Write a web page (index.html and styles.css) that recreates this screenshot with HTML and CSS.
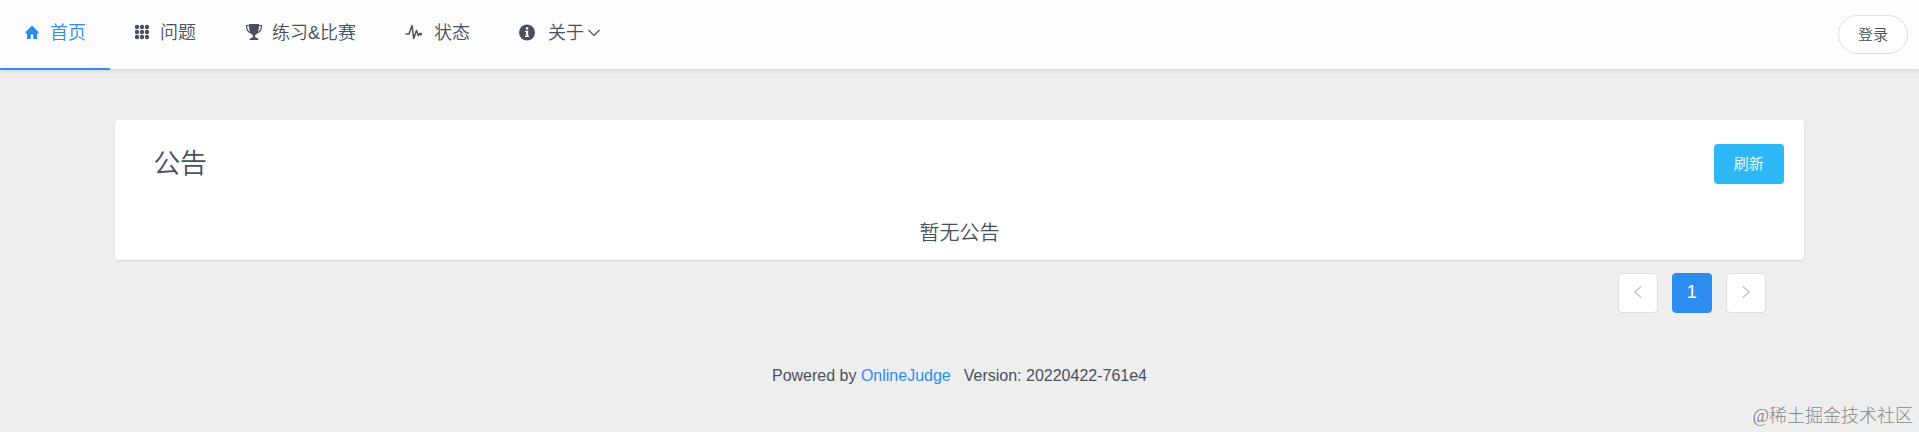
FILE: index.html
```
<!DOCTYPE html>
<html lang="zh-CN">
<head>
  <meta charset="UTF-8" />
  <meta name="viewport" content="width=device-width, initial-scale=1.0"/>
  <title>OnlineJudge</title>
  <link rel="stylesheet" href="styles.css">
</head>
<body>

<!-- Header -->
<header class="header">
  <nav class="menu">
    <a class="menu-item active" href="#">
      <svg width="18" height="18" viewBox="0 0 18 18" fill="currentColor"><path d="M8 1.500 1.500 8v1.500H3V15h3.800v-4.500h2.400V15H13V9.500h1.500V8z"/></svg>
      首页
    </a>
    <a class="menu-item" href="#">
      <svg width="18" height="18" viewBox="0 0 18 18" fill="currentColor">
        <circle cx="3" cy="3" r="2.200"/><circle cx="8" cy="3" r="2.200"/><circle cx="13" cy="3" r="2.200"/>
        <circle cx="3" cy="8" r="2.200"/><circle cx="8" cy="8" r="2.200"/><circle cx="13" cy="8" r="2.200"/>
        <circle cx="3" cy="13" r="2.200"/><circle cx="8" cy="13" r="2.200"/><circle cx="13" cy="13" r="2.200"/>
      </svg>
      问题
    </a>
    <a class="menu-item" href="#">
      <svg width="20" height="18" viewBox="0 0 20 18" fill="currentColor">
        <path d="M5 0h10v2c0 4.500-1.500 8-3.800 9v2.500c2 .2 3 1 3.300 2.500h-9c.3-1.500 1.300-2.300 3.300-2.500V11C6.500 10 5 6.500 5 2z"/>
        <path d="M5 1.500H2.500C2.500 5.500 4 8 7 9M15 1.500h2.500C17.500 5.500 16 8 13 9" fill="none" stroke="currentColor" stroke-width="1.200"/>
      </svg>
      练习&amp;比赛
    </a>
    <a class="menu-item" href="#">
      <svg width="22" height="18" viewBox="0 0 22 18" fill="none" stroke="currentColor" stroke-width="1.500" stroke-linejoin="round">
        <path d="M1.500 10H5L8 1.500l1.700 13L12.500 6.500l1.800 5 1-1.500h1.500"/>
        <circle cx="16.700" cy="10" r="1.500" fill="currentColor" stroke="none"/>
      </svg>
      状态
    </a>
    <a class="menu-item about" href="#">
      <svg width="18" height="18" viewBox="0 0 18 18"><circle cx="9" cy="8.500" r="8" fill="currentColor"/><path d="M8 3.300h2.200V5.500H8zM7 6.700h3.200v5H11v1.200H7v-1.200h1V7.900H7z" fill="#fff"/></svg>
      <span>关于</span>
      <svg class="arrow" width="12" height="18" viewBox="0 0 12 18" fill="none" stroke="currentColor" stroke-width="1.200"><path d="M.5 6 6 11.500 11.500 6"/></svg>
    </a>
  </nav>
  <button class="btn-login">登录</button>
</header>

<!-- Announcements -->
<main class="content">
  <section class="panel">
    <div class="panel-head">
      <h1>公告</h1>
      <button class="btn-refresh">刷新</button>
    </div>
    <p class="empty">暂无公告</p>
  </section>
  <div class="pager">
    <button class="page" aria-label="上一页" disabled>
      <svg width="12" height="14" viewBox="0 0 12 14" fill="none" stroke="currentColor" stroke-width="1.200"><path d="M9 1.500 3 7l6 5.500"/></svg>
    </button>
    <button class="page current">1</button>
    <button class="page" aria-label="下一页" disabled>
      <svg width="12" height="14" viewBox="0 0 12 14" fill="none" stroke="currentColor" stroke-width="1.200"><path d="m3 1.500 6 5.500-6 5.500"/></svg>
    </button>
  </div>
</main>

<footer class="footer">
  <span>Powered by <a href="#">OnlineJudge</a></span>
  <span>Version: 20220422-761e4</span>
</footer>

<div class="watermark">@稀土掘金技术社区</div>

</body>
</html>
```

FILE: styles.css
```
* {
  box-sizing: border-box;
}
body {
  font-family: "Liberation Sans", "Noto Sans CJK SC", sans-serif;
  font-size: 16px;
  font-weight: 350;
  line-height: 24px;
  color: #495060;
  background: #eee;
  margin: 0;
}
a {
  color: #2d8cf0;
  text-decoration: none;
}
button {
  font-family: inherit;
  font-weight: inherit;
  border: 1px solid #dddee1;
  background: white;
  color: #495060;
  padding: 0;
}

/* Header */
.header {
  display: flex;
  justify-content: space-between;
  align-items: flex-start;
  height: 69px;
  padding-right: 11px;
  background: #fdfdfd;
  box-shadow: 0 1px 5px rgba(0,0,0,0.15);
}
.menu {
  display: flex;
}
.menu-item {
  display: flex;
  align-items: center;
  gap: 8px;
  height: 70px;
  padding: 0 24px 4px;
  font-size: 18px;
  color: #495060;
}
.menu-item.active {
  color: #2d8cf0;
  border-bottom: 2px solid #2d8cf0;
  padding-bottom: 2px;
}
.menu-item.about {
  gap: 12px;
}
.about .arrow {
  margin-left: -8px;
}
.btn-login {
  width: 70px;
  height: 39px;
  margin-top: 15px;
  padding-bottom: 2px;
  border-radius: 20px;
  font-size: 15px;
}

/* Announcements */
.content {
  margin: 51px 6% 0;
}
.panel {
  background: white;
  border-radius: 4px;
  padding: 24px 20px 12px 38px;
  box-shadow: 0 1px 2px rgba(0,0,0,0.12);
}
.panel-head {
  display: flex;
  justify-content: space-between;
  align-items: center;
}
.panel-head h1 {
  margin: 0;
  font-size: 27px;
  font-weight: inherit;
  line-height: 40px;
}
.btn-refresh {
  width: 70px;
  height: 40px;
  padding-bottom: 3px;
  border: none;
  border-radius: 4px;
  background: #2db7f5;
  color: white;
  font-size: 15px;
}
.empty {
  margin: 34px 18px 0 0;
  font-size: 20px;
  line-height: 30px;
  text-align: center;
}
.pager {
  display: flex;
  justify-content: flex-end;
  gap: 14px;
  margin: 13px 38px 0 0;
}
.page {
  display: flex;
  align-items: center;
  justify-content: center;
  width: 40px;
  height: 40px;
  padding-bottom: 2px;
  border-radius: 4px;
  font-size: 18px;
  color: #bbbec4;
}
.page.current {
  background: #2d8cf0;
  border-color: #2d8cf0;
  color: white;
}

/* Footer */
.footer {
  display: flex;
  justify-content: center;
  gap: 13px;
  margin-top: 51px;
}
.watermark {
  position: absolute;
  right: 6px;
  bottom: 4px;
  font-family: "Liberation Serif", "Noto Sans CJK SC", serif;
  font-size: 18px;
  font-weight: 300;
  color: #888;
}
```
